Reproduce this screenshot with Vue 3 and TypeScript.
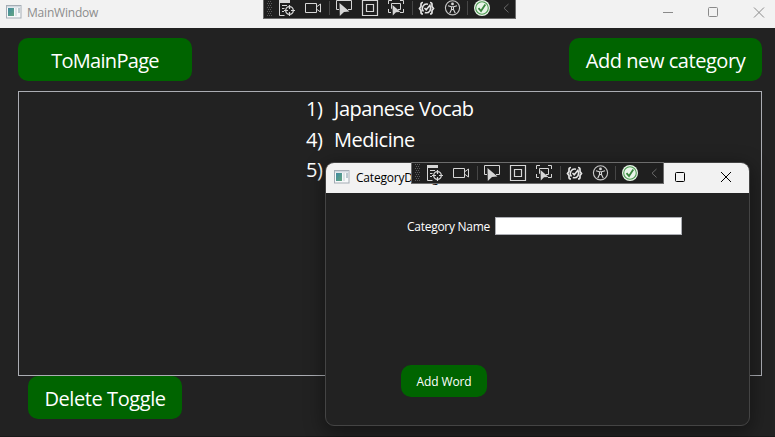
<script setup lang="ts">
import { defineComponent, h } from 'vue'

interface Category {
  id: number
  name: string
}

const categories: Category[] = [
  { id: 1, name: 'Japanese Vocab' },
  { id: 4, name: 'Medicine' },
  { id: 5, name: '' },
]

const gripDots: [number, number][] = []
for (let row = 0; row < 9; row++) {
  for (let col = 0; col < (row % 2 ? 2 : 3); col++) {
    gripDots.push([4 + col * 2 + (row % 2), 2 + row * 2])
  }
}

const line = (d: string, w = 1, stroke = '#d6d6d6') =>
  h('path', { d, fill: 'none', stroke, 'stroke-width': w })
const solid = (d: string, fill = '#d6d6d6') => h('path', { d, fill })

const DebugBar = defineComponent({
  setup: () => () =>
    h('svg', { width: 253, height: 22, viewBox: '0 0 253 22' }, [
      h('rect', { x: 0.5, y: 0.5, width: 252, height: 21, fill: '#1f1f1f', stroke: '#6c6c6c' }),
      ...gripDots.map(([x, y]) => h('rect', { x, y, width: 1, height: 1, fill: '#5c5c5c' })),
      line('M66.5 4V18M149.5 4V18M204.5 4V18', 1, '#464646'),
      // live visual tree
      solid('M16 3H27V6H16Z'),
      line('M16.5 5V18.5H21.5M19 8.5H24M19 11.5H21.5M19 14.5H21'),
      h('circle', { cx: 26.5, cy: 13.5, r: 3.8, fill: 'none', stroke: '#d6d6d6', 'stroke-width': 1.3 }),
      line('M26.5 8V12M26.5 15V19M21 13.5H25M28 13.5H32', 1.2),
      // camera
      line('M42.5 6.5H53.5V15.5H42.5ZM54 9.5L57.5 7V15L54 12.5'),
      // select element
      line('M76 12.5H73.5V3.5H88.5V12.5H85'),
      solid('M76.5 6L86.5 14.5L81 15L76.8 19Z'),
      // layout adorners
      line('M99.5 3.5H114.5V18.5H99.5ZM103.5 7.5H110.5V14.5H103.5Z', 1.2),
      // track focus
      line('M125.5 7V3.5H129M137 3.5H140.5V7M140.5 12V15.5H137M125.5 12V15.5H128M129 11.5H128.5V6.5H137.5V12.5H135'),
      solid('M129.5 8L137.5 15L133 15.3L129.8 18.5Z'),
      // binding failures
      line('M160 5.5Q158 5.5 158 7.5V9.5L156.5 11.5L158 13.5V15.5Q158 17 160 17M167 5.5Q169 5.5 169 7.5V9.5L170.5 11.5L169 13.5V15.5Q169 17 167 17', 1.7, '#e4e4e4'),
      line('M165 7.3A4.4 4.4 0 0 0 160.5 14.5M166.8 8.7A4.4 4.4 0 0 1 161.8 15.5M161.5 11L163.2 12.8L167.5 7.5', 1.5, '#e4e4e4'),
      // accessibility
      h('circle', { cx: 189.5, cy: 10.8, r: 7.1, fill: 'none', stroke: '#c8c8c8', 'stroke-width': 1.1 }),
      h('circle', { cx: 189.5, cy: 6.9, r: 1.4, fill: '#d6d6d6' }),
      line('M185 8.8L188.3 9.8H190.7L194 8.8M188.5 9.8V12.5L186.7 16.2M190.5 9.8V12.5L192.3 16.2M188.5 12.5H190.5', 1.1),
      // hot reload status
      h('circle', { cx: 219, cy: 11, r: 8, fill: '#e9f5e9' }),
      h('circle', { cx: 219, cy: 11, r: 6.3, fill: '#e9f5e9', stroke: '#4b9a50', 'stroke-width': 1.1 }),
      line('M215.5 11.2L218 14L222.3 7.5', 1.8, '#38853d'),
      line('M245.5 7L241 11.2L245.5 15.4', 1, '#686868'),
    ]),
})

const AppIcon = defineComponent({
  setup: () => () =>
    h('svg', { width: 16, height: 14, viewBox: '0 0 16 14' }, [
      h('defs', [
        h('linearGradient', { id: 'pane', x1: 0, y1: 0, x2: 1, y2: 1 }, [
          h('stop', { offset: '0', 'stop-color': '#3f8aa0' }),
          h('stop', { offset: '1', 'stop-color': '#65a682' }),
        ]),
      ]),
      h('rect', { x: 0.5, y: 0.5, width: 14.5, height: 12.5, fill: '#f7f9fa', stroke: '#a5adb5' }),
      h('rect', { x: 1, y: 1, width: 13.5, height: 1.5, fill: '#d0d8df' }),
      h('rect', { x: 2, y: 3, width: 6, height: 8, fill: 'url(#pane)' }),
      h('rect', { x: 9, y: 3, width: 2, height: 8, fill: '#dde3e6' }),
      h('rect', { x: 12, y: 3, width: 2, height: 5, fill: '#bccad0' }),
    ]),
})
</script>

<template>
  <div class="desktop">
    <section class="main-window">
      <header class="titlebar">
        <AppIcon />
        <span class="title">MainWindow</span>
        <svg class="controls" width="102" height="12" viewBox="0 0 102 12">
          <path d="M0 6.5H10M45.5 2.5q0-1 1-1h7q1 0 1 1v7q0 1-1 1h-7q-1 0-1-1zM91 1.5L101 11.5M101 1.5L91 11.5" />
        </svg>
      </header>
      <main class="page">
        <div class="actions">
          <button class="btn to-main"><span>ToMainPage</span></button>
          <button class="btn add-category"><span>Add new category</span></button>
        </div>
        <div class="list">
          <div v-for="c in categories" :key="c.id" class="row">
            <span class="num">{{ c.id }})</span>
            <span v-if="c.name" class="name">{{ c.name }}</span>
          </div>
        </div>
        <button class="btn delete"><span>Delete Toggle</span></button>
      </main>
      <DebugBar class="main-bar" />
    </section>

    <section class="dialog">
      <header class="titlebar">
        <AppIcon />
        <span class="title">CategoryDialog</span>
        <svg class="controls" width="56" height="12" viewBox="0 0 56 12">
          <path d="M0.5 2.5q0-1 1-1h7q1 0 1 1v7q0 1-1 1h-7q-1 0-1-1zM46 1L56 11M56 1L46 11" />
        </svg>
      </header>
      <div class="form">
        <label class="field">
          <span class="label">Category Name</span>
          <input type="text" />
        </label>
        <button class="btn add-word"><span>Add Word</span></button>
      </div>
      <DebugBar class="dialog-bar" />
    </section>
  </div>
</template>

<style>
body {
  background: #222;
  overflow: hidden;
}
</style>

<style scoped>
.desktop {
  position: relative;
  width: 775px;
  height: 437px;
  overflow: hidden;
  background: #222;
  font-family: 'Open Sans', 'Noto Sans', sans-serif;
  color: #fff;
}
.desktop * {
  box-sizing: border-box;
}
.main-window {
  height: 437px;
  display: flex;
  flex-direction: column;
  border-bottom: 1px solid #191919;
}
.titlebar {
  display: flex;
  align-items: center;
  background: #f2f2f2;
  white-space: nowrap;
}
.main-window .titlebar {
  height: 28px;
  flex: none;
  padding: 0 10px 4px 6px;
}
.title {
  font-size: 12px;
  line-height: 16px;
  margin-left: 5px;
  padding-top: 2px;
}
.main-window .title {
  color: #8c8c8c;
  letter-spacing: -0.2px;
}
.controls {
  margin-left: auto;
  fill: none;
  stroke: #8a8a8a;
  stroke-width: 1;
}
.page {
  padding: 10px 13px 0 18px;
  display: flex;
  flex-direction: column;
}
.actions {
  display: flex;
  justify-content: space-between;
  margin-bottom: 10px;
}
.btn {
  display: flex;
  align-items: center;
  justify-content: center;
  height: 43px;
  padding: 0;
  border: 0;
  border-radius: 10px;
  background: #006400;
  color: #fff;
  font-family: inherit;
  font-size: 20px;
  white-space: nowrap;
}
.btn span {
  padding-top: 1px;
}
.to-main {
  width: 174px;
  letter-spacing: -0.7px;
}
.add-category {
  width: 193px;
  letter-spacing: -0.45px;
}
.list {
  height: 285px;
  border: 1px solid #abadb3;
  padding: 2px 0 0 287px;
}
.row {
  display: flex;
  height: 30.5px;
  line-height: 30px;
  font-size: 20px;
  white-space: nowrap;
}
.num {
  width: 28px;
  letter-spacing: -0.5px;
}
.name {
  letter-spacing: -0.47px;
}
.delete {
  width: 154px;
  margin-left: 10px;
  letter-spacing: -0.42px;
}
.main-bar {
  position: absolute;
  left: 263px;
  top: -3px;
}
.dialog {
  position: absolute;
  left: 325px;
  top: 162px;
  width: 425px;
  height: 264px;
  border: 1px solid #444;
  border-radius: 9px;
  background: #222;
  box-shadow: 0 5px 18px 3px rgba(0, 0, 0, 0.35);
}
.dialog .titlebar {
  height: 30px;
  padding: 0 18px 2px 8px;
  border-radius: 8px 8px 0 0;
}
.dialog .title {
  color: #000;
  margin-left: 6px;
  letter-spacing: -0.2px;
}
.dialog .controls {
  stroke: #000;
}
.form {
  display: flex;
  flex-direction: column;
  align-items: flex-start;
}
.field {
  display: flex;
  align-items: center;
  margin: 24px 0 0 81px;
  height: 18px;
}
.label {
  width: 88px;
  font-size: 12px;
  line-height: 18px;
  padding-top: 1px;
  letter-spacing: -0.27px;
  white-space: nowrap;
}
.field input {
  width: 187px;
  height: 18px;
  padding: 0;
  border: 1px solid #abadb3;
  background: #fff;
}
.add-word {
  width: 86px;
  height: 32px;
  margin: 130px 0 0 75px;
  font-size: 12px;
  letter-spacing: -0.1px;
}
.dialog-bar {
  position: absolute;
  left: 85px;
  top: -1px;
}
</style>
